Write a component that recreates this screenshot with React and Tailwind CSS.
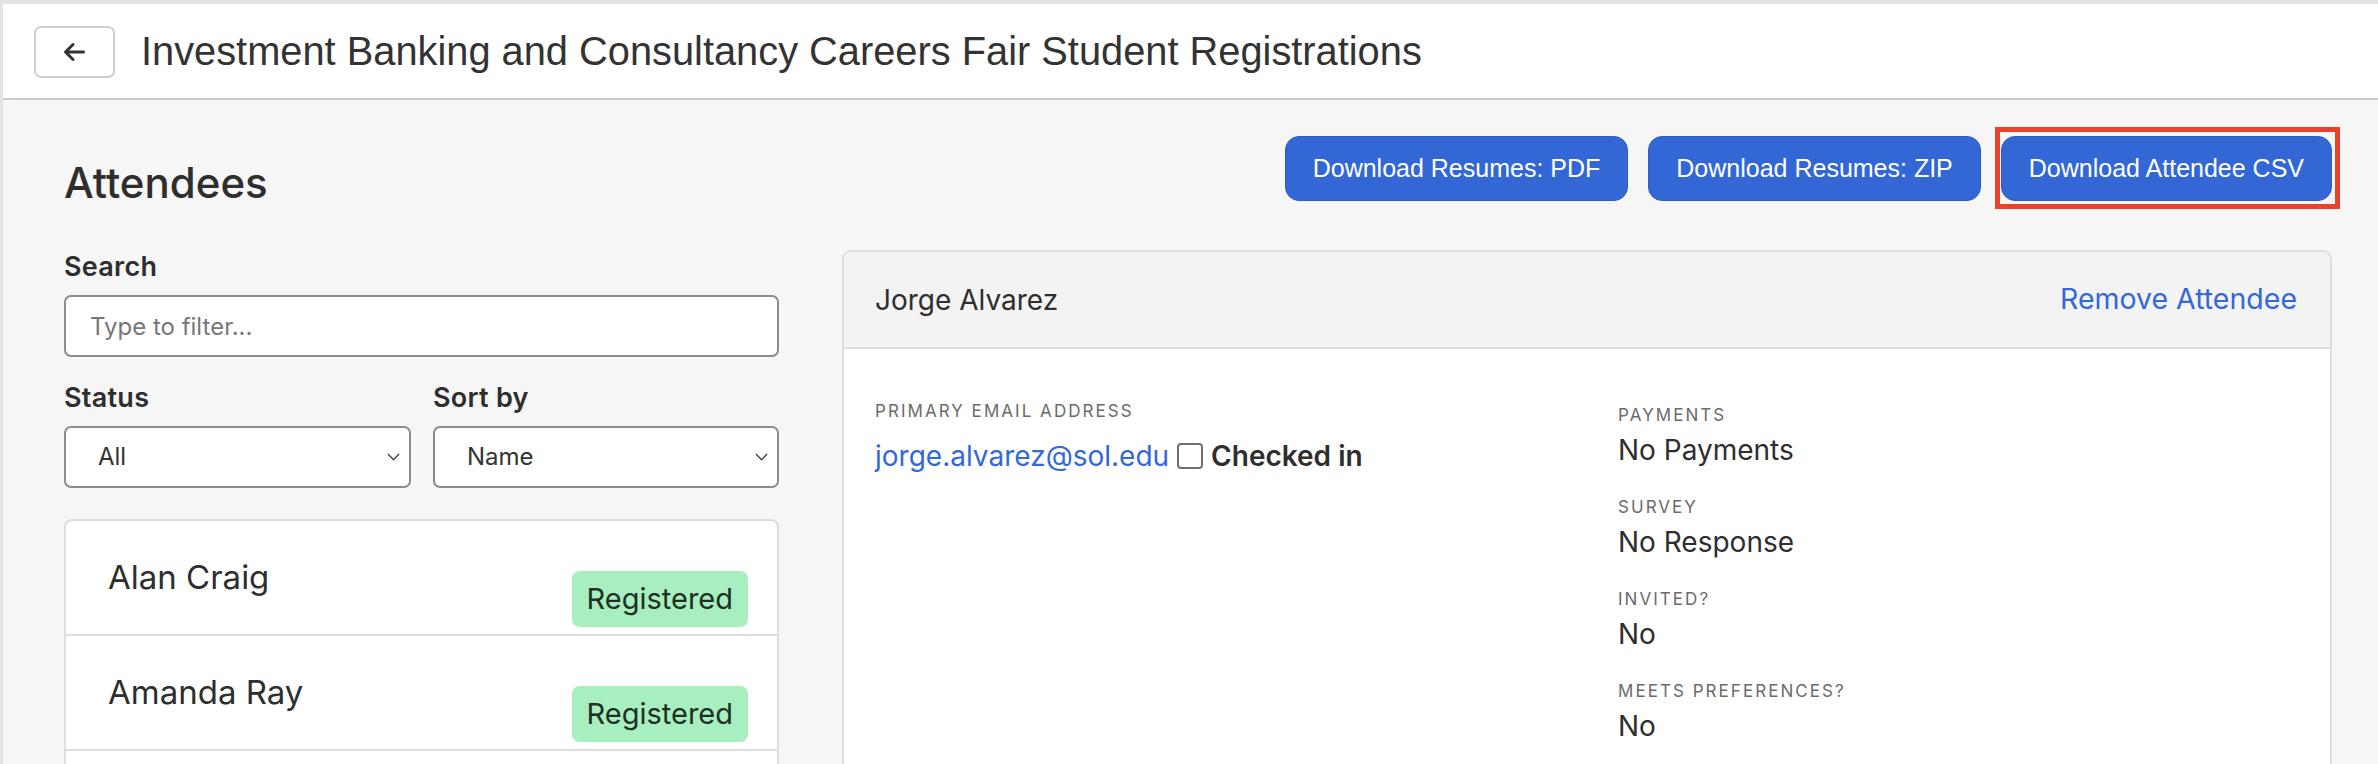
import { useState } from 'react'

const attendees = [
  { name: 'Alan Craig', status: 'Registered' },
  { name: 'Amanda Ray', status: 'Registered' },
]

const details = [
  { label: 'Payments', value: 'No Payments' },
  { label: 'Survey', value: 'No Response' },
  { label: 'Invited?', value: 'No' },
  { label: 'Meets Preferences?', value: 'No' },
]

function Chevron() {
  return (
    <svg width="13" height="8" viewBox="0 0 13 8" className="absolute right-[9px] top-1/2 -translate-y-1/2">
      <polyline points="1,1 6.5,6.8 12,1" fill="none" stroke="#444" strokeWidth="1.4" />
    </svg>
  )
}

function SelectBox({ label, value, className }) {
  return (
    <div className={className}>
      <p className="text-[27px] font-semibold leading-[32px] tracking-[0.01em] text-[#2e2e2e]">{label}</p>
      <div className="relative mt-[12px] h-[62px] rounded-[7px] border-2 border-[#8c8c8c] bg-white flex items-center pl-[32px] text-[24px] text-[#333]">
        {value}
        <Chevron />
      </div>
    </div>
  )
}

function BlueButton({ children }) {
  return (
    <button className="h-[65px] px-[27px] rounded-[14px] bg-[#3367d6] border border-[#2c5cc4] text-white text-[25px]">
      {children}
    </button>
  )
}

export default function App() {
  const [query, setQuery] = useState('')

  return (
    <div className="min-h-screen bg-[#f6f6f6] border-l-[3px] border-t-[4px] border-[#e3e3e3] text-[#2e2e2e] font-['Inter','Liberation_Sans',sans-serif]">
      <header className="h-[96px] bg-white border-b-2 border-[#c7ccd3] flex items-center pl-[31px] pt-[2px]">
        <button className="w-[81px] h-[52px] rounded-[7px] border-2 border-[#cfcfcf] bg-white flex items-center justify-center">
          <svg width="21" height="18" viewBox="0 64 448 384" fill="#333">
            <path d="M9.4 233.4c-12.5 12.5-12.5 32.8 0 45.3l160 160c12.5 12.5 32.8 12.5 45.3 0s12.5-32.8 0-45.3L109.2 288 416 288c17.7 0 32-14.3 32-32s-14.3-32-32-32l-306.7 0L214.6 118.6c12.5-12.5 12.5-32.8 0-45.3s-32.8-12.5-45.3 0l-160 160z" />
          </svg>
        </button>
        <h1 className="ml-[26px] text-[39.8px] text-[#333] font-['Liberation_Sans',Arial,sans-serif]">
          Investment Banking and Consultancy Careers Fair Student Registrations
        </h1>
      </header>

      <main className="flex pl-[61px] pr-[46px] gap-[63px]">
        <section className="w-[715px] shrink-0">
          <h2 className="mt-[58px] text-[42px] leading-[50px] font-medium">Attendees</h2>

          <p className="mt-[43px] text-[27px] font-semibold leading-[32px] tracking-[0.01em]">Search</p>
          <input
            value={query}
            onChange={e => setQuery(e.target.value)}
            placeholder="Type to filter..."
            className="mt-[12px] w-full h-[62px] rounded-[7px] border-2 border-[#8c8c8c] bg-white px-[24px] text-[24px] placeholder:text-[#777] outline-none"
          />

          <div className="mt-[25px] flex gap-[22px]">
            <SelectBox label="Status" value="All" className="w-[347px]" />
            <SelectBox label="Sort by" value="Name" className="flex-1" />
          </div>

          <div className="mt-[31px] rounded-t-[8px] border-2 border-b-0 border-[#dedede] bg-white">
            {attendees.map(a => (
              <div key={a.name} className="h-[115px] border-b-2 border-[#dedede] flex justify-between pl-[42px] pr-[29px]">
                <p className="pt-[36px] text-[33px] leading-[40px]">{a.name}</p>
                <span className="self-start mt-[50px] h-[56px] px-[15px] rounded-[8px] bg-[#a7efbf] flex items-center text-[29px] text-[#1f2f25]">
                  {a.status}
                </span>
              </div>
            ))}
            <div className="h-[80px]" />
          </div>
        </section>

        <section className="flex-1 min-w-0">
          <div className="mt-[36px] flex justify-end gap-[20px] font-['Liberation_Sans',Arial,sans-serif]">
            <BlueButton>Download Resumes: PDF</BlueButton>
            <BlueButton>Download Resumes: ZIP</BlueButton>
            <div className="relative">
              <BlueButton>Download Attendee CSV</BlueButton>
              <span className="absolute -left-[6px] -right-[8px] -top-[9px] -bottom-[8px] border-[5px] border-[#e8432a] pointer-events-none" />
            </div>
          </div>

          <div className="mt-[49px] rounded-[9px] border-2 border-[#dedede] bg-white overflow-hidden">
            <div className="h-[97px] bg-[#f3f3f3] border-b-2 border-[#dedede] flex items-center justify-between pl-[31px] pr-[33px]">
              <p className="text-[28px]">Jorge Alvarez</p>
              <a href="#" className="text-[28.5px] text-[#3268d8]">Remove Attendee</a>
            </div>
            <div className="grid grid-cols-[743px_1fr] pl-[31px] pb-[40px]">
              <div className="pt-[50px]">
                <p className="text-[17px] tracking-[0.12em] uppercase text-[#6b6b6b] leading-[24px]">Primary Email Address</p>
                <div className="mt-[12px] flex items-center gap-[8px] text-[28px]">
                  <a href="#" className="text-[#3268d8]">jorge.alvarez@sol.edu</a>
                  <span className="w-[26px] h-[26px] rounded-[4px] border-2 border-[#707070] bg-white" />
                  <span className="font-semibold">Checked in</span>
                </div>
              </div>
              <div className="pt-[54px]">
                {details.map((d, i) => (
                  <div key={d.label} className={i > 0 ? 'mt-[24px]' : ''}>
                    <p className="text-[17px] tracking-[0.12em] uppercase text-[#6b6b6b] leading-[24px]">{d.label}</p>
                    <p className="mt-[2px] text-[28px] leading-[42px]">{d.value}</p>
                  </div>
                ))}
              </div>
            </div>
          </div>
        </section>
      </main>
    </div>
  )
}
